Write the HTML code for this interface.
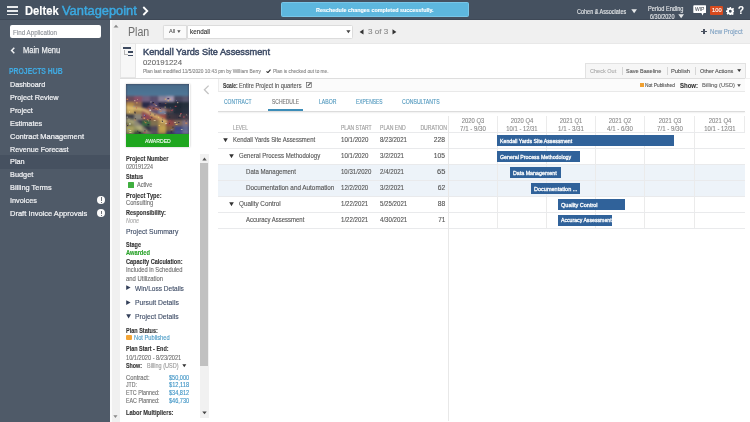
<!DOCTYPE html>
<html><head><meta charset="utf-8">
<style>
*{margin:0;padding:0;box-sizing:border-box}
html,body{width:750px;height:422px;overflow:hidden;background:#f0f0f0;font-family:"Liberation Sans",sans-serif;position:relative}
.a{position:absolute;white-space:nowrap}
.t{position:absolute;white-space:nowrap;transform-origin:0 50%;-webkit-text-stroke:0.12px currentColor}
</style></head><body>
<div class="a" style="left:0px;top:0px;width:750px;height:20px;background:#455160;"></div>
<div class="a" style="left:0px;top:19px;width:750px;height:1px;background:#3e4856;"></div>
<div class="a" style="left:7px;top:6.2px;width:11.2px;height:1.5px;background:#e8eaec;"></div>
<div class="a" style="left:7px;top:10px;width:11.2px;height:1.5px;background:#e8eaec;"></div>
<div class="a" style="left:7px;top:13.8px;width:11.2px;height:1.5px;background:#e8eaec;"></div>
<svg class="a" style="left:142px;top:5.5px" width="7" height="10" viewBox="0 0 7 10"><path d="M1.3 1 L5.3 5 L1.3 9" fill="none" stroke="#fff" stroke-width="1.8"/></svg>
<div class="a" style="left:281.3px;top:2.4px;width:187.5px;height:14.6px;background:#5db7de;border:0.8px solid #78c6e8;border-radius:1.5px"></div>
<svg class="a" style="left:630.5px;top:9px" width="7" height="5"><path d="M0.3 0.3 L6 0.3 L3.15 4.3Z" fill="#e6e8ea"/></svg>
<svg class="a" style="left:677.5px;top:14px" width="7" height="5"><path d="M0.3 0.3 L6 0.3 L3.15 4.3Z" fill="#e6e8ea"/></svg>
<svg class="a" style="left:692.8px;top:4.8px" width="13.5" height="11" viewBox="0 0 13.5 11"><path d="M1.2 0.3 H12.3 Q13.2 0.3 13.2 1.2 V7.2 Q13.2 8.1 12.3 8.1 H10.6 L9.6 10.6 L8.4 8.1 H1.2 Q0.3 8.1 0.3 7.2 V1.2 Q0.3 0.3 1.2 0.3Z" fill="#fff"/></svg>
<div class="a" style="left:709.7px;top:5.6px;width:13.8px;height:9.6px;background:#d74a1e;border-radius:1px"></div>
<svg class="a" style="left:725.8px;top:6.8px" width="8.6" height="8.6" viewBox="0 0 24 24"><path fill="#fff" fill-rule="evenodd" d="M10 0h4l.6 3.2a9 9 0 0 1 2.4 1l2.7-1.9 2.8 2.8-1.9 2.7a9 9 0 0 1 1 2.4L24 10v4l-3.2.6a9 9 0 0 1-1 2.4l1.9 2.7-2.8 2.8-2.7-1.9a9 9 0 0 1-2.4 1L14 24h-4l-.6-3.2a9 9 0 0 1-2.4-1l-2.7 1.9-2.8-2.8 1.9-2.7a9 9 0 0 1-1-2.4L0 14v-4l3.2-.6a9 9 0 0 1 1-2.4L2.3 4.3l2.8-2.8L7.8 3.4a9 9 0 0 1 2.4-1zM12 8a4 4 0 1 0 0 8 4 4 0 0 0 0-8z"/></svg>
<div class="a" style="left:0px;top:20px;width:110px;height:402px;background:#4f5a68;"></div>
<div class="a" style="left:9.5px;top:25.3px;width:91px;height:13.1px;background:#ffffff;border-radius:2px"></div>
<svg class="a" style="left:9.5px;top:46.5px" width="6" height="7"><path d="M4.3 0.8 L1.6 3.5 L4.3 6.2" fill="none" stroke="#f0f2f4" stroke-width="1.5"/></svg>
<div class="a" style="left:0px;top:155.2px;width:110px;height:13.4px;background:#465160;"></div>
<div class="a" style="left:97px;top:195.8px;width:8.4px;height:8.4px;border-radius:50%;background:#fbfbfb"></div>
<div class="a" style="left:100.75px;top:197.4px;width:0.9px;height:3.4px;background:#6a6f76;"></div>
<div class="a" style="left:100.75px;top:201.5px;width:0.9px;height:1px;background:#6a6f76;"></div>
<div class="a" style="left:97px;top:209.0px;width:8.4px;height:8.4px;border-radius:50%;background:#fbfbfb"></div>
<div class="a" style="left:100.75px;top:210.6px;width:0.9px;height:3.4px;background:#6a6f76;"></div>
<div class="a" style="left:100.75px;top:214.7px;width:0.9px;height:1px;background:#6a6f76;"></div>
<div class="a" style="left:110px;top:20px;width:1.5px;height:402px;background:#fbfbfb;"></div>
<svg class="a" style="left:112.5px;top:24px" width="6" height="4"><path d="M0.5 3.5 L5.5 3.5 L3 0.8Z" fill="#8a8a8a"/></svg>
<svg class="a" style="left:112.5px;top:415px" width="5" height="3.5"><path d="M0.3 0.3 L4.5 0.3 L2.4 3Z" fill="#8a8a8a"/></svg>
<div class="a" style="left:163.3px;top:24.5px;width:24.2px;height:14.4px;background:#fafafa;border:1px solid #dcdcdc;border-radius:1.5px 0 0 1.5px;box-shadow:0 0.5px 1px rgba(0,0,0,0.08)"></div>
<svg class="a" style="left:177.2px;top:30px" width="4" height="3.5"><path d="M0.2 0.3 L3.6 0.3 L1.9 2.9Z" fill="#555"/></svg>
<div class="a" style="left:187.3px;top:24.5px;width:165.7px;height:14.4px;background:#ffffff;border:1px solid #dcdcdc;border-radius:0 1.5px 1.5px 0"></div>
<svg class="a" style="left:345.5px;top:30px" width="5" height="4"><path d="M0.3 0.3 L4.5 0.3 L2.4 3.2Z" fill="#444"/></svg>
<svg class="a" style="left:358.5px;top:28.6px" width="5" height="6"><path d="M4.5 0.3 L4.5 5.5 L0.6 2.9Z" fill="#333"/></svg>
<svg class="a" style="left:391.8px;top:28.6px" width="5" height="6"><path d="M0.5 0.3 L0.5 5.5 L4.4 2.9Z" fill="#333"/></svg>
<div class="a" style="left:701.3px;top:30.8px;width:5.5px;height:1.4px;background:#4a5260;"></div>
<div class="a" style="left:703.35px;top:28.7px;width:1.4px;height:5.6px;background:#4a5260;"></div>
<div class="a" style="left:120px;top:42.5px;width:630px;height:35.3px;background:#ffffff;border-top:1px solid #e8e8e8"></div>
<div class="a" style="left:120px;top:77.6px;width:625px;height:1px;background:#dedede;box-shadow:0 0.5px 1px rgba(0,0,0,0.06)"></div>
<div class="a" style="left:120px;top:42.5px;width:16px;height:35.3px;background:#f7f7f7;border:1px solid #e6e6e6"></div>
<div class="a" style="left:122.5px;top:47.2px;width:8.5px;height:1.7px;background:#3d4a60;"></div>
<div class="a" style="left:124.2px;top:50px;width:0.9px;height:5.2px;background:#b4b4b4;"></div>
<div class="a" style="left:124.2px;top:54.3px;width:3.8px;height:0.9px;background:#b4b4b4;"></div>
<div class="a" style="left:128.4px;top:51.1px;width:4.3px;height:1.6px;background:#3d4a60;"></div>
<div class="a" style="left:128.4px;top:54.5px;width:4.3px;height:1.6px;background:#3d4a60;"></div>
<svg class="a" style="left:266px;top:68.6px" width="5" height="4.5" viewBox="0 0 5 4.5"><path d="M0.5 2.3 L1.9 3.7 L4.5 0.6" fill="none" stroke="#333" stroke-width="1.1"/></svg>
<div class="a" style="left:120px;top:78.6px;width:88.5px;height:343.4px;background:#ffffff;"></div>
<div class="a" style="left:125.5px;top:83.5px;width:64.2px;height:63.5px;background:#ffffff;box-shadow:0 0 2px rgba(0,0,0,0.25)"></div>
<div class="a" style="left:126px;top:84px;width:63.3px;height:50px;overflow:hidden;background:#3a3a50"><svg style="position:absolute;left:0;top:0;filter:blur(1px)" width="63.3" height="50" viewBox="0 0 63 50" preserveAspectRatio="none"><defs><linearGradient id="sky" x1="0" y1="0" x2="0" y2="1"><stop offset="0" stop-color="#466886"/><stop offset="1" stop-color="#4f7898"/></linearGradient></defs><rect x="-3" y="-3" width="70" height="16" fill="url(#sky)"/>
<rect x="-3" y="12" width="11.2" height="6.2" fill="#6a4a5c"/>
<rect x="8" y="12" width="8.2" height="6.2" fill="#8a5068"/>
<rect x="16" y="12" width="8.2" height="6.2" fill="#706080"/>
<rect x="24" y="12" width="8.2" height="6.2" fill="#5a5070"/>
<rect x="32" y="12" width="8.2" height="6.2" fill="#8a8098"/>
<rect x="40" y="12" width="8.2" height="6.2" fill="#a898b0"/>
<rect x="48" y="12" width="8.2" height="6.2" fill="#4a4860"/>
<rect x="56" y="12" width="10" height="6.2" fill="#5a5870"/>
<rect x="-3" y="18" width="11.2" height="6.2" fill="#b08848"/>
<rect x="8" y="18" width="8.2" height="6.2" fill="#906850"/>
<rect x="16" y="18" width="8.2" height="6.2" fill="#2a2a48"/>
<rect x="24" y="18" width="8.2" height="6.2" fill="#504870"/>
<rect x="32" y="18" width="8.2" height="6.2" fill="#2a2a44"/>
<rect x="40" y="18" width="8.2" height="6.2" fill="#222c3a"/>
<rect x="48" y="18" width="8.2" height="6.2" fill="#202a36"/>
<rect x="56" y="18" width="10" height="6.2" fill="#26303c"/>
<rect x="-3" y="24" width="11.2" height="6.2" fill="#c8a860"/>
<rect x="8" y="24" width="8.2" height="6.2" fill="#a08050"/>
<rect x="16" y="24" width="8.2" height="6.2" fill="#8a4a50"/>
<rect x="24" y="24" width="8.2" height="6.2" fill="#605070"/>
<rect x="32" y="24" width="8.2" height="6.2" fill="#7088a8"/>
<rect x="40" y="24" width="8.2" height="6.2" fill="#303848"/>
<rect x="48" y="24" width="8.2" height="6.2" fill="#242c38"/>
<rect x="56" y="24" width="10" height="6.2" fill="#2a3240"/>
<rect x="-3" y="30" width="11.2" height="6.2" fill="#404048"/>
<rect x="8" y="30" width="8.2" height="6.2" fill="#8a8478"/>
<rect x="16" y="30" width="8.2" height="6.2" fill="#904858"/>
<rect x="24" y="30" width="8.2" height="6.2" fill="#a06048"/>
<rect x="32" y="30" width="8.2" height="6.2" fill="#9a5048"/>
<rect x="40" y="30" width="8.2" height="6.2" fill="#403840"/>
<rect x="48" y="30" width="8.2" height="6.2" fill="#3a3440"/>
<rect x="56" y="30" width="10" height="6.2" fill="#4a4048"/>
<rect x="-3" y="36" width="11.2" height="6.2" fill="#70704a"/>
<rect x="8" y="36" width="8.2" height="6.2" fill="#383850"/>
<rect x="16" y="36" width="8.2" height="6.2" fill="#3a6a40"/>
<rect x="24" y="36" width="8.2" height="6.2" fill="#807050"/>
<rect x="32" y="36" width="8.2" height="6.2" fill="#b09050"/>
<rect x="40" y="36" width="8.2" height="6.2" fill="#904848"/>
<rect x="48" y="36" width="8.2" height="6.2" fill="#806858"/>
<rect x="56" y="36" width="10" height="6.2" fill="#807080"/>
<rect x="-3" y="42" width="11.2" height="5.2" fill="#a8a060"/>
<rect x="8" y="42" width="8.2" height="5.2" fill="#909060"/>
<rect x="16" y="42" width="8.2" height="5.2" fill="#303040"/>
<rect x="24" y="42" width="8.2" height="5.2" fill="#504858"/>
<rect x="32" y="42" width="8.2" height="5.2" fill="#c0a050"/>
<rect x="40" y="42" width="8.2" height="5.2" fill="#806040"/>
<rect x="48" y="42" width="8.2" height="5.2" fill="#404880"/>
<rect x="56" y="42" width="10" height="5.2" fill="#606890"/>
<rect x="-3" y="47" width="11.2" height="6.2" fill="#909058"/>
<rect x="8" y="47" width="8.2" height="6.2" fill="#405038"/>
<rect x="16" y="47" width="8.2" height="6.2" fill="#282830"/>
<rect x="24" y="47" width="8.2" height="6.2" fill="#605060"/>
<rect x="32" y="47" width="8.2" height="6.2" fill="#b09048"/>
<rect x="40" y="47" width="8.2" height="6.2" fill="#3a3a60"/>
<rect x="48" y="47" width="8.2" height="6.2" fill="#4a5090"/>
<rect x="56" y="47" width="10" height="6.2" fill="#707098"/>
<path d="M-2 21 L18 24 L42 37 L40 39.5 L16 27 L-2 24.5Z" fill="#e8c878" opacity="0.75"/>
<path d="M-2 33 L10 36 L26 50 L18 50 L6 40 L-2 38Z" fill="#c8c090" opacity="0.6"/>
<path d="M22 22 L46 26 L46 28 L22 25Z" fill="#d07050" opacity="0.6"/></svg><svg style="position:absolute;left:0;top:0;filter:blur(0.4px);opacity:0.8" width="63.3" height="50" viewBox="0 0 63 50" preserveAspectRatio="none">
<rect x="38.6" y="39.7" width="0.6" height="0.9" fill="#e8d070"/>
<rect x="58.5" y="36.4" width="0.8" height="0.9" fill="#e08848"/>
<rect x="15.3" y="32.6" width="0.9" height="1.1" fill="#181820"/>
<rect x="25.3" y="19.6" width="0.8" height="1.1" fill="#302850"/>
<rect x="8.6" y="35.2" width="0.8" height="1.3" fill="#e08848"/>
<rect x="0.3" y="40.8" width="1.8" height="0.7" fill="#e08848"/>
<rect x="59.6" y="32.4" width="0.9" height="1.3" fill="#2a3448"/>
<rect x="12.2" y="47.7" width="1.0" height="0.8" fill="#302850"/>
<rect x="10.3" y="18.2" width="1.1" height="1.2" fill="#f0c060"/>
<rect x="36.3" y="34.5" width="0.7" height="0.8" fill="#202040"/>
<rect x="19.0" y="38.1" width="1.3" height="1.1" fill="#e08848"/>
<rect x="3.5" y="48.1" width="1.9" height="0.8" fill="#fff0c0"/>
<rect x="25.1" y="32.8" width="1.1" height="1.0" fill="#302850"/>
<rect x="0.6" y="14.7" width="1.5" height="1.3" fill="#e08848"/>
<rect x="7.4" y="21.9" width="1.1" height="0.8" fill="#8090d0"/>
<rect x="32.5" y="40.9" width="1.4" height="1.1" fill="#f0c060"/>
<rect x="22.8" y="23.7" width="1.9" height="0.6" fill="#302850"/>
<rect x="21.1" y="35.0" width="1.1" height="1.2" fill="#e08848"/>
<rect x="33.8" y="24.2" width="1.0" height="1.1" fill="#202040"/>
<rect x="38.9" y="39.0" width="2.0" height="0.6" fill="#f8f8f0"/>
<rect x="3.0" y="48.5" width="1.9" height="0.5" fill="#e8d070"/>
<rect x="45.9" y="25.4" width="1.2" height="0.8" fill="#c04858"/>
<rect x="3.5" y="46.0" width="1.7" height="0.8" fill="#fff0c0"/>
<rect x="12.8" y="48.3" width="1.9" height="1.0" fill="#181820"/>
<rect x="48.9" y="16.8" width="1.1" height="0.5" fill="#302850"/>
<rect x="26.1" y="18.1" width="1.8" height="1.3" fill="#181820"/>
<rect x="28.1" y="30.6" width="1.3" height="0.7" fill="#202040"/>
<rect x="25.0" y="18.3" width="1.8" height="0.9" fill="#302850"/>
<rect x="11.1" y="46.7" width="0.9" height="0.9" fill="#202040"/>
<rect x="31.9" y="32.7" width="1.1" height="1.1" fill="#e8d070"/>
<rect x="48.0" y="38.0" width="1.7" height="0.8" fill="#fff0c0"/>
<rect x="43.7" y="23.1" width="1.0" height="1.3" fill="#405070"/>
<rect x="44.4" y="47.4" width="1.5" height="1.0" fill="#202040"/>
<rect x="0.7" y="32.7" width="1.1" height="0.7" fill="#f8f8f0"/>
<rect x="17.9" y="31.0" width="1.1" height="1.0" fill="#202040"/>
<rect x="45.7" y="42.8" width="1.9" height="0.6" fill="#202040"/>
<rect x="53.8" y="29.2" width="1.9" height="0.9" fill="#c04858"/>
<rect x="32.8" y="19.0" width="1.9" height="0.9" fill="#202040"/>
<rect x="42.9" y="38.9" width="0.8" height="1.1" fill="#302850"/>
<rect x="36.0" y="37.0" width="1.0" height="0.9" fill="#302850"/>
<rect x="53.8" y="22.7" width="0.9" height="1.0" fill="#1a2438"/>
<rect x="38.7" y="19.5" width="1.5" height="0.5" fill="#e08848"/>
<rect x="29.2" y="21.1" width="1.8" height="0.6" fill="#fff0c0"/>
<rect x="60.0" y="30.4" width="0.6" height="0.9" fill="#e0c0a0"/>
<rect x="23.6" y="35.0" width="0.9" height="1.1" fill="#181820"/>
<rect x="23.2" y="25.6" width="1.8" height="1.2" fill="#f8f8f0"/>
<rect x="42.7" y="32.7" width="1.4" height="0.7" fill="#1a2438"/>
<rect x="18.3" y="31.5" width="1.0" height="0.8" fill="#181820"/>
<rect x="8.0" y="27.7" width="1.5" height="0.8" fill="#181820"/>
<rect x="8.8" y="34.5" width="1.3" height="0.7" fill="#181820"/>
<rect x="8.2" y="16.3" width="1.1" height="0.8" fill="#fff0c0"/>
<rect x="56.8" y="32.4" width="1.5" height="1.2" fill="#c04858"/>
<rect x="23.3" y="28.5" width="1.3" height="0.9" fill="#c83c50"/>
<rect x="43.9" y="26.8" width="1.4" height="0.7" fill="#2a3448"/>
<rect x="60.8" y="30.9" width="0.6" height="1.3" fill="#405070"/>
<rect x="19.1" y="46.5" width="1.3" height="0.6" fill="#e08848"/>
<rect x="38.5" y="29.0" width="0.7" height="0.6" fill="#f8f8f0"/>
<rect x="24.3" y="30.3" width="1.0" height="1.2" fill="#e8d070"/>
<rect x="48.5" y="21.8" width="1.8" height="1.1" fill="#c04858"/>
<rect x="17.7" y="30.7" width="1.3" height="1.2" fill="#8090d0"/>
<rect x="54.6" y="45.2" width="1.7" height="0.7" fill="#fff0c0"/>
<rect x="33.1" y="25.1" width="1.6" height="0.5" fill="#f8f8f0"/>
<rect x="21.7" y="37.5" width="0.8" height="0.5" fill="#181820"/>
<rect x="34.3" y="37.7" width="1.8" height="0.9" fill="#f0c060"/>
<rect x="0.9" y="41.0" width="1.4" height="1.1" fill="#302850"/>
<rect x="59.1" y="36.4" width="1.3" height="1.0" fill="#302850"/>
<rect x="44.6" y="45.4" width="1.8" height="0.6" fill="#8090d0"/>
<rect x="51.8" y="38.0" width="1.4" height="1.0" fill="#302850"/>
<rect x="29.3" y="24.2" width="1.3" height="0.9" fill="#e08848"/>
<rect x="30.9" y="24.9" width="1.2" height="0.9" fill="#e08848"/>
<rect x="3.0" y="39.4" width="1.7" height="1.1" fill="#f8f8f0"/>
<rect x="41.1" y="13.9" width="2.0" height="1.3" fill="#302850"/>
<rect x="43.5" y="14.8" width="0.9" height="1.0" fill="#f0c060"/>
<rect x="59.0" y="38.6" width="2.0" height="1.1" fill="#e08848"/>
<rect x="27.2" y="19.6" width="1.2" height="0.6" fill="#e08848"/>
<rect x="38.6" y="14.6" width="1.5" height="1.1" fill="#f0c060"/>
<rect x="17.4" y="33.6" width="1.6" height="1.2" fill="#f0c060"/>
<rect x="8.3" y="28.5" width="1.6" height="0.9" fill="#202040"/>
<rect x="21.9" y="36.6" width="0.8" height="0.7" fill="#fff0c0"/>
<rect x="35.3" y="37.4" width="1.9" height="0.9" fill="#f8f8f0"/>
<rect x="38.5" y="22.5" width="0.9" height="1.2" fill="#e8d070"/>
<rect x="17.6" y="48.1" width="1.8" height="0.9" fill="#c83c50"/>
<rect x="24.1" y="17.7" width="1.5" height="0.6" fill="#fff0c0"/>
<rect x="41.4" y="16.3" width="1.3" height="0.9" fill="#f0c060"/>
<rect x="24.2" y="29.7" width="0.8" height="0.9" fill="#202040"/>
<rect x="33.6" y="26.8" width="1.9" height="0.8" fill="#e08848"/>
<rect x="49.3" y="40.0" width="2.0" height="1.0" fill="#f0c060"/>
<rect x="50.9" y="18.0" width="1.1" height="1.2" fill="#e0c0a0"/>
<rect x="18.0" y="46.5" width="1.7" height="0.8" fill="#202040"/>
<rect x="44.8" y="25.9" width="1.7" height="0.8" fill="#c04858"/>
<rect x="52.8" y="31.6" width="2.0" height="0.7" fill="#e0c0a0"/>
<rect x="11.2" y="15.3" width="0.6" height="0.7" fill="#fff0c0"/>
<rect x="2.4" y="45.0" width="1.5" height="0.8" fill="#8090d0"/>
<rect x="26.5" y="23.8" width="1.9" height="0.8" fill="#181820"/>
<rect x="28.6" y="19.9" width="0.7" height="1.2" fill="#e08848"/>
<rect x="53.9" y="29.9" width="1.0" height="0.7" fill="#e0c0a0"/>
<rect x="10.0" y="23.3" width="0.6" height="1.2" fill="#c83c50"/>
<rect x="21.3" y="40.1" width="1.9" height="1.1" fill="#202040"/>
<rect x="41.8" y="30.0" width="0.8" height="1.0" fill="#2a3448"/>
<rect x="18.0" y="37.3" width="0.6" height="1.1" fill="#e08848"/>
<rect x="35.6" y="36.6" width="1.2" height="1.3" fill="#181820"/>
<rect x="22.6" y="24.2" width="1.1" height="0.6" fill="#8090d0"/>
<rect x="61.6" y="29.8" width="0.8" height="0.7" fill="#2a3448"/>
<rect x="2.7" y="34.9" width="0.6" height="0.5" fill="#f8f8f0"/>
<rect x="48.3" y="27.8" width="0.6" height="1.2" fill="#1a2438"/>
<rect x="51.9" y="33.3" width="1.6" height="0.7" fill="#1a2438"/>
<rect x="49.8" y="16.3" width="0.7" height="0.7" fill="#8090d0"/>
<rect x="3.1" y="27.3" width="0.7" height="1.2" fill="#fff0c0"/>
<rect x="27.6" y="36.1" width="1.9" height="0.7" fill="#fff0c0"/>
<rect x="43.1" y="36.1" width="1.3" height="0.6" fill="#c83c50"/></svg></div>
<div class="a" style="left:126px;top:134px;width:63.3px;height:12.7px;background:#1fa61f;"></div>
<div class="a" style="left:128px;top:182px;width:6px;height:5.5px;background:#3fae3f;border-radius:0.5px"></div>
<svg class="a" style="left:126px;top:285.29999999999995px" width="5" height="5.5"><path d="M0.2 0.2 L4.6 2.6 L0.2 5Z" fill="#34405a"/></svg>
<svg class="a" style="left:126px;top:300.0px" width="5" height="5.5"><path d="M0.2 0.2 L4.6 2.6 L0.2 5Z" fill="#34405a"/></svg>
<svg class="a" style="left:125.8px;top:314.2px" width="5.5" height="5"><path d="M0.2 0.3 L5 0.3 L2.6 4.6Z" fill="#34405a"/></svg>
<div class="a" style="left:126.2px;top:334.5px;width:5.6px;height:5.8px;background:#f3a536;border-radius:1px"></div>
<svg class="a" style="left:181.5px;top:363.5px" width="5" height="4"><path d="M0.3 0.3 L4.3 0.3 L2.3 3.3Z" fill="#333"/></svg>
<div class="a" style="left:199.5px;top:154px;width:9px;height:264px;background:#f1f1f1;"></div>
<div class="a" style="left:200px;top:163px;width:8px;height:202.5px;background:#c1c1c1;"></div>
<svg class="a" style="left:201.5px;top:157px" width="5" height="4"><path d="M0.3 3.5 L4.7 3.5 L2.5 0.6Z" fill="#555"/></svg>
<svg class="a" style="left:201.5px;top:410.5px" width="5" height="4"><path d="M0.3 0.4 L4.7 0.4 L2.5 3.3Z" fill="#444"/></svg>
<div class="a" style="left:208.5px;top:78.6px;width:10px;height:343.4px;background:#ffffff;"></div>
<svg class="a" style="left:203px;top:84.8px" width="7" height="10"><path d="M5.6 0.6 L1.4 4.8 L5.6 9" fill="none" stroke="#c4c4c4" stroke-width="1.3"/></svg>
<div class="a" style="left:218.3px;top:78.6px;width:531.7px;height:343.4px;background:#ffffff;"></div>
<div class="a" style="left:584.5px;top:63.3px;width:161.3px;height:14.6px;background:#f6f6f6;border:1px solid #e2e2e2;border-bottom:none"></div>
<div class="a" style="left:621.5px;top:66.5px;width:0.8px;height:8px;background:#d6d6d6;"></div>
<div class="a" style="left:666.8px;top:66.5px;width:0.8px;height:8px;background:#d6d6d6;"></div>
<div class="a" style="left:694.9px;top:66.5px;width:0.8px;height:8px;background:#d6d6d6;"></div>
<svg class="a" style="left:737px;top:69.2px" width="4.5" height="3.5"><path d="M0.2 0.3 L4.2 0.3 L2.2 3.1Z" fill="#333"/></svg>
<div class="a" style="left:218.3px;top:78.6px;width:526.7px;height:13.8px;background:#fbfbfb;border-bottom:1px solid #e9e9e9;border-left:1px solid #ececec"></div>
<svg class="a" style="left:306.3px;top:82.3px" width="6" height="6" viewBox="0 0 6 6"><rect x="0.5" y="0.6" width="4.8" height="4.8" fill="none" stroke="#666" stroke-width="0.7"/><path d="M1.5 4.3 L1.7 3.3 L4.2 0.8 L5 1.6 L2.5 4.1 Z" fill="#555"/></svg>
<div class="a" style="left:639.6px;top:82.8px;width:4.6px;height:4.6px;background:#f0a030;"></div>
<svg class="a" style="left:737px;top:84px" width="4" height="3.5"><path d="M0.2 0.3 L3.8 0.3 L2 3.1Z" fill="#555"/></svg>
<div class="a" style="left:218.3px;top:110.5px;width:526.7px;height:1px;background:#dcdcdc;box-shadow:0 1px 1.5px rgba(0,0,0,0.08)"></div>
<div class="a" style="left:268px;top:109px;width:34.8px;height:1.8px;background:#3d8db8;"></div>
<div class="a" style="left:218.3px;top:164px;width:526.5px;height:32px;background:#edf3f9;"></div>
<div class="a" style="left:496.8px;top:115.5px;width:1px;height:112.5px;background:#ebebeb;"></div>
<div class="a" style="left:546.0px;top:115.5px;width:1px;height:112.5px;background:#ebebeb;"></div>
<div class="a" style="left:595.1px;top:115.5px;width:1px;height:112.5px;background:#ebebeb;"></div>
<div class="a" style="left:644.2px;top:115.5px;width:1px;height:112.5px;background:#ebebeb;"></div>
<div class="a" style="left:693.9px;top:115.5px;width:1px;height:112.5px;background:#ebebeb;"></div>
<div class="a" style="left:744.3px;top:115.5px;width:1px;height:17px;background:#ebebeb;"></div>
<div class="a" style="left:218.3px;top:131.5px;width:526.5px;height:1px;background:#e9eaec;"></div>
<div class="a" style="left:218.3px;top:147.5px;width:526.5px;height:1px;background:#e9eaec;"></div>
<div class="a" style="left:218.3px;top:163.5px;width:526.5px;height:1px;background:#e9eaec;"></div>
<div class="a" style="left:218.3px;top:179.5px;width:526.5px;height:1px;background:#e9eaec;"></div>
<div class="a" style="left:218.3px;top:195.5px;width:526.5px;height:1px;background:#e9eaec;"></div>
<div class="a" style="left:218.3px;top:211.5px;width:526.5px;height:1px;background:#e9eaec;"></div>
<div class="a" style="left:218.3px;top:227.5px;width:526.5px;height:1px;background:#e9eaec;"></div>
<div class="a" style="left:447.5px;top:115.5px;width:1px;height:305px;background:#e8e8e8;"></div>
<svg class="a" style="left:222.6px;top:137.9px" width="5.5" height="4.5"><path d="M0.2 0.2 L4.8 0.2 L2.5 4.2Z" fill="#333"/></svg>
<svg class="a" style="left:228.79999999999998px;top:153.9px" width="5.5" height="4.5"><path d="M0.2 0.2 L4.8 0.2 L2.5 4.2Z" fill="#333"/></svg>
<svg class="a" style="left:228.79999999999998px;top:201.9px" width="5.5" height="4.5"><path d="M0.2 0.2 L4.8 0.2 L2.5 4.2Z" fill="#333"/></svg>
<div class="a" style="left:497.1px;top:135px;width:177.3px;height:11px;background:#30629a;"></div>
<div class="a" style="left:497.1px;top:151px;width:82.7px;height:11px;background:#30629a;"></div>
<div class="a" style="left:509.9px;top:166.6px;width:51.1px;height:11px;background:#30629a;"></div>
<div class="a" style="left:530.7px;top:182.7px;width:49.1px;height:11px;background:#30629a;"></div>
<div class="a" style="left:558.4px;top:198.6px;width:67.0px;height:11px;background:#30629a;"></div>
<div class="a" style="left:558.4px;top:214.5px;width:53.6px;height:11px;background:#30629a;"></div>
<div class="t" style="left:24.8px;top:5.60px;font-size:11.9px;line-height:11.9px;color:#ffffff;font-weight:bold;transform:scaleX(0.9439);">Deltek</div>
<div class="t" style="left:62px;top:5.60px;font-size:11.9px;line-height:11.9px;color:#3ba9e1;transform:scaleX(1.0809);-webkit-text-stroke:0.45px #3ba9e1">Vantagepoint</div>
<div class="t" style="left:316px;top:7.12px;font-size:6px;line-height:6px;color:#ffffff;font-weight:bold;transform:scaleX(0.9027);">Reschedule changes completed successfully.</div>
<div class="t" style="left:577.2px;top:8.80px;font-size:6.3px;line-height:6.3px;color:#e6e8ea;transform:scaleX(0.8730);">Cohen &amp; Associates</div>
<div class="t" style="left:648px;top:5.90px;font-size:6.3px;line-height:6.3px;color:#e6e8ea;transform:scaleX(0.8973);">Period Ending</div>
<div class="t" style="left:650px;top:13.80px;font-size:6.3px;line-height:6.3px;color:#e6e8ea;transform:scaleX(0.8745);">6/30/2020</div>
<div class="t" style="left:694.6px;top:7.00px;font-size:5.2px;line-height:5.2px;color:#555a62;transform:scaleX(0.9580);">WIP</div>
<div class="t" style="left:711.8px;top:7.40px;font-size:6.2px;line-height:6.2px;color:#ffffff;transform:scaleX(0.9295);">100</div>
<div class="t" style="left:738px;top:5.40px;font-size:10.5px;line-height:10.5px;color:#ffffff;font-weight:bold;transform:scaleX(0.9343);">?</div>
<div class="t" style="left:13px;top:28.84px;font-size:7px;line-height:7px;color:#8c9097;transform:scaleX(0.8903);">Find Application</div>
<div class="t" style="left:22.8px;top:45.70px;font-size:8.3px;line-height:8.3px;color:#eceef0;transform:scaleX(0.9063);-webkit-text-stroke:0.25px #eceef0">Main Menu</div>
<div class="t" style="left:9.4px;top:67.80px;font-size:8.2px;line-height:8.2px;color:#40aae2;font-weight:bold;transform:scaleX(0.8355);">PROJECTS HUB</div>
<div class="t" style="left:9.8px;top:81.30px;font-size:8.1px;line-height:8.1px;color:#f2f3f5;transform:scaleX(0.8887);-webkit-text-stroke:0.22px #f2f3f5">Dashboard</div>
<div class="t" style="left:9.8px;top:94.30px;font-size:8.1px;line-height:8.1px;color:#f2f3f5;transform:scaleX(0.9003);-webkit-text-stroke:0.22px #f2f3f5">Project Review</div>
<div class="t" style="left:9.8px;top:107.00px;font-size:8.1px;line-height:8.1px;color:#f2f3f5;transform:scaleX(0.9063);-webkit-text-stroke:0.22px #f2f3f5">Project</div>
<div class="t" style="left:9.8px;top:119.80px;font-size:8.1px;line-height:8.1px;color:#f2f3f5;transform:scaleX(0.9063);-webkit-text-stroke:0.22px #f2f3f5">Estimates</div>
<div class="t" style="left:9.8px;top:132.70px;font-size:8.1px;line-height:8.1px;color:#f2f3f5;transform:scaleX(0.9239);-webkit-text-stroke:0.22px #f2f3f5">Contract Management</div>
<div class="t" style="left:9.8px;top:145.50px;font-size:8.1px;line-height:8.1px;color:#f2f3f5;transform:scaleX(0.8845);-webkit-text-stroke:0.22px #f2f3f5">Revenue Forecast</div>
<div class="t" style="left:9.8px;top:158.30px;font-size:8.1px;line-height:8.1px;color:#f2f3f5;transform:scaleX(0.9063);-webkit-text-stroke:0.22px #f2f3f5">Plan</div>
<div class="t" style="left:9.8px;top:171.10px;font-size:8.1px;line-height:8.1px;color:#f2f3f5;transform:scaleX(0.9063);-webkit-text-stroke:0.22px #f2f3f5">Budget</div>
<div class="t" style="left:9.8px;top:183.90px;font-size:8.1px;line-height:8.1px;color:#f2f3f5;transform:scaleX(0.9118);-webkit-text-stroke:0.22px #f2f3f5">Billing Terms</div>
<div class="t" style="left:9.8px;top:196.80px;font-size:8.1px;line-height:8.1px;color:#f2f3f5;transform:scaleX(0.9063);-webkit-text-stroke:0.22px #f2f3f5">Invoices</div>
<div class="t" style="left:9.8px;top:209.80px;font-size:8.1px;line-height:8.1px;color:#f2f3f5;transform:scaleX(0.9287);-webkit-text-stroke:0.22px #f2f3f5">Draft Invoice Approvals</div>
<div class="t" style="left:127.7px;top:25.84px;font-size:12px;line-height:12px;color:#6e6e6e;transform:scaleX(0.8863);-webkit-text-stroke:0">Plan</div>
<div class="t" style="left:168.7px;top:28.40px;font-size:6.2px;line-height:6.2px;color:#555555;transform:scaleX(0.8998);">All</div>
<div class="t" style="left:190px;top:28.24px;font-size:7px;line-height:7px;color:#333333;transform:scaleX(0.9014);">kendall</div>
<div class="t" style="left:367.9px;top:29.10px;font-size:6.8px;line-height:6.8px;color:#8a8a8a;transform:scaleX(1.1871);">3 of 3</div>
<div class="t" style="left:710px;top:29.10px;font-size:6.6px;line-height:6.6px;color:#7a9ec0;transform:scaleX(0.9199);">New Project</div>
<div class="t" style="left:143px;top:47.10px;font-size:9.9px;line-height:9.9px;color:#3e4c66;transform:scaleX(0.9317);-webkit-text-stroke:0.5px #3e4c66">Kendall Yards Site Assessment</div>
<div class="t" style="left:143px;top:59.20px;font-size:7.5px;line-height:7.5px;color:#6a6a6a;transform:scaleX(1.0387);">020191224</div>
<div class="t" style="left:143px;top:70.00px;font-size:4.8px;line-height:4.8px;color:#8a8a8a;transform:scaleX(1.0043);">Plan last modified 11/5/2020 10:43 pm by William Berry</div>
<div class="t" style="left:272.5px;top:70.00px;font-size:4.8px;line-height:4.8px;color:#8a8a8a;transform:scaleX(0.9864);">Plan is checked out to me.</div>
<div class="t" style="left:145px;top:137.52px;font-size:6px;line-height:6px;color:#ffffff;transform:scaleX(0.8533);">AWARDED</div>
<div class="t" style="left:126.1px;top:155.50px;font-size:6.4px;line-height:6.4px;color:#333333;font-weight:bold;transform:scaleX(0.8930);">Project Number</div>
<div class="t" style="left:126.1px;top:163.60px;font-size:6.4px;line-height:6.4px;color:#6f6f6f;transform:scaleX(0.8438);">020191224</div>
<div class="t" style="left:126.1px;top:173.90px;font-size:6.4px;line-height:6.4px;color:#333333;font-weight:bold;transform:scaleX(0.8704);">Status</div>
<div class="t" style="left:137.2px;top:182.10px;font-size:6.4px;line-height:6.4px;color:#6f6f6f;transform:scaleX(0.8790);">Active</div>
<div class="t" style="left:126.1px;top:192.50px;font-size:6.4px;line-height:6.4px;color:#333333;font-weight:bold;transform:scaleX(0.8897);">Project Type:</div>
<div class="t" style="left:126.1px;top:200.30px;font-size:6.4px;line-height:6.4px;color:#6f6f6f;transform:scaleX(0.8973);">Consulting</div>
<div class="t" style="left:126.1px;top:209.90px;font-size:6.4px;line-height:6.4px;color:#333333;font-weight:bold;transform:scaleX(0.8709);">Responsibility:</div>
<div class="t" style="left:126.1px;top:218.00px;font-size:6.4px;line-height:6.4px;color:#aaaaaa;transform:scaleX(0.8442);font-style:italic">None</div>
<div class="t" style="left:126.1px;top:227.70px;font-size:7.2px;line-height:7.2px;color:#3e4c66;transform:scaleX(0.9488);">Project Summary</div>
<div class="t" style="left:126.1px;top:242.10px;font-size:6.4px;line-height:6.4px;color:#333333;font-weight:bold;transform:scaleX(0.8618);">Stage</div>
<div class="t" style="left:126.1px;top:250.00px;font-size:6.4px;line-height:6.4px;color:#27a127;font-weight:bold;transform:scaleX(0.8930);">Awarded</div>
<div class="t" style="left:126.1px;top:259.20px;font-size:6.4px;line-height:6.4px;color:#333333;font-weight:bold;transform:scaleX(0.8692);">Capacity Calculation:</div>
<div class="t" style="left:126.1px;top:267.10px;font-size:6.4px;line-height:6.4px;color:#6f6f6f;transform:scaleX(0.8984);">Included in Scheduled</div>
<div class="t" style="left:126.1px;top:276.20px;font-size:6.4px;line-height:6.4px;color:#6f6f6f;transform:scaleX(0.9239);">and Utilization</div>
<div class="t" style="left:134.6px;top:284.54px;font-size:7px;line-height:7px;color:#3e4c66;transform:scaleX(0.9378);">Win/Loss Details</div>
<div class="t" style="left:134.6px;top:299.24px;font-size:7px;line-height:7px;color:#3e4c66;transform:scaleX(0.9703);">Pursuit Details</div>
<div class="t" style="left:134.6px;top:313.14px;font-size:7px;line-height:7px;color:#3e4c66;transform:scaleX(0.9659);">Project Details</div>
<div class="t" style="left:126.1px;top:327.60px;font-size:6.4px;line-height:6.4px;color:#333333;font-weight:bold;transform:scaleX(0.8609);">Plan Status:</div>
<div class="t" style="left:134.4px;top:335.10px;font-size:6.4px;line-height:6.4px;color:#4a9bc6;transform:scaleX(0.8945);">Not Published</div>
<div class="t" style="left:126.1px;top:346.00px;font-size:6.4px;line-height:6.4px;color:#333333;font-weight:bold;transform:scaleX(0.8568);">Plan Start - End:</div>
<div class="t" style="left:126.1px;top:354.50px;font-size:6.4px;line-height:6.4px;color:#6f6f6f;transform:scaleX(0.8825);">10/1/2020 - 8/23/2021</div>
<div class="t" style="left:126.1px;top:362.70px;font-size:6.4px;line-height:6.4px;color:#333333;font-weight:bold;transform:scaleX(0.8346);">Show:</div>
<div class="t" style="left:146.5px;top:362.70px;font-size:6.4px;line-height:6.4px;color:#999999;transform:scaleX(0.8612);">Billing (USD)</div>
<div class="t" style="left:126.1px;top:374.50px;font-size:6.4px;line-height:6.4px;color:#6f6f6f;transform:scaleX(0.9099);">Contract:</div>
<div class="t" style="left:168.7px;top:374.50px;font-size:6.4px;line-height:6.4px;color:#3d93c4;transform:scaleX(0.8698);">$50,000</div>
<div class="t" style="left:126.1px;top:382.20px;font-size:6.4px;line-height:6.4px;color:#6f6f6f;transform:scaleX(0.8148);">JTD:</div>
<div class="t" style="left:168.7px;top:382.20px;font-size:6.4px;line-height:6.4px;color:#3d93c4;transform:scaleX(0.8878);">$12,118</div>
<div class="t" style="left:126.1px;top:390.00px;font-size:6.4px;line-height:6.4px;color:#6f6f6f;transform:scaleX(0.8418);">ETC Planned:</div>
<div class="t" style="left:168.7px;top:390.00px;font-size:6.4px;line-height:6.4px;color:#3d93c4;transform:scaleX(0.8698);">$34,812</div>
<div class="t" style="left:126.1px;top:397.70px;font-size:6.4px;line-height:6.4px;color:#6f6f6f;transform:scaleX(0.8342);">EAC Planned:</div>
<div class="t" style="left:168.7px;top:397.70px;font-size:6.4px;line-height:6.4px;color:#3d93c4;transform:scaleX(0.8698);">$46,730</div>
<div class="t" style="left:126.1px;top:409.80px;font-size:6.4px;line-height:6.4px;color:#333333;font-weight:bold;transform:scaleX(0.8858);">Labor Multipliers:</div>
<div class="t" style="left:590px;top:67.72px;font-size:6px;line-height:6px;color:#ababab;transform:scaleX(0.9239);">Check Out</div>
<div class="t" style="left:626.3px;top:67.72px;font-size:6px;line-height:6px;color:#555555;transform:scaleX(0.9176);">Save Baseline</div>
<div class="t" style="left:671px;top:67.72px;font-size:6px;line-height:6px;color:#555555;transform:scaleX(0.9651);">Publish</div>
<div class="t" style="left:700px;top:67.72px;font-size:6px;line-height:6px;color:#555555;transform:scaleX(0.9242);">Other Actions</div>
<div class="t" style="left:222.5px;top:82.70px;font-size:6.5px;line-height:6.5px;color:#3a3a3a;font-weight:bold;transform:scaleX(0.7674);">Scale:</div>
<div class="t" style="left:239.3px;top:82.70px;font-size:6.5px;line-height:6.5px;color:#555555;transform:scaleX(0.8736);">Entire Project in quarters</div>
<div class="t" style="left:645.3px;top:82.80px;font-size:5px;line-height:5px;color:#555555;transform:scaleX(0.9569);">Not Published</div>
<div class="t" style="left:680.2px;top:81.80px;font-size:7.2px;line-height:7.2px;color:#333333;font-weight:bold;transform:scaleX(0.8348);">Show:</div>
<div class="t" style="left:701.8px;top:83.20px;font-size:5.9px;line-height:5.9px;color:#666666;transform:scaleX(0.9787);">Billing (USD)</div>
<div class="t" style="left:224px;top:98.70px;font-size:6.5px;line-height:6.5px;color:#4f97bd;transform:scaleX(0.7616);">CONTRACT</div>
<div class="t" style="left:272px;top:98.70px;font-size:6.5px;line-height:6.5px;color:#777777;transform:scaleX(0.7626);">SCHEDULE</div>
<div class="t" style="left:319px;top:98.70px;font-size:6.5px;line-height:6.5px;color:#4f97bd;transform:scaleX(0.7892);">LABOR</div>
<div class="t" style="left:355.9px;top:98.70px;font-size:6.5px;line-height:6.5px;color:#4f97bd;transform:scaleX(0.7590);">EXPENSES</div>
<div class="t" style="left:402px;top:98.70px;font-size:6.5px;line-height:6.5px;color:#4f97bd;transform:scaleX(0.7926);">CONSULTANTS</div>
<div class="t" style="left:233px;top:125.20px;font-size:6.4px;line-height:6.4px;color:#999999;transform:scaleX(0.7485);">LEVEL</div>
<div class="t" style="left:340.5px;top:125.20px;font-size:6.4px;line-height:6.4px;color:#999999;transform:scaleX(0.7907);">PLAN START</div>
<div class="t" style="left:380.3px;top:125.20px;font-size:6.4px;line-height:6.4px;color:#999999;transform:scaleX(0.8039);">PLAN END</div>
<div class="t" style="right:303.50px;transform-origin:100% 50%;top:125.20px;font-size:6.4px;line-height:6.4px;color:#999999;transform:scaleX(0.8053);">DURATION</div>
<div class="t" style="left:372.65px;width:200px;text-align:center;transform-origin:50% 50%;top:117.80px;font-size:6.6px;line-height:6.6px;color:#8a8a8a;transform:scaleX(0.8855);">2020 Q3</div>
<div class="t" style="left:372.65px;width:200px;text-align:center;transform-origin:50% 50%;top:125.70px;font-size:6.6px;line-height:6.6px;color:#8a8a8a;transform:scaleX(0.9297);">7/1 - 9/30</div>
<div class="t" style="left:421.90px;width:200px;text-align:center;transform-origin:50% 50%;top:117.80px;font-size:6.6px;line-height:6.6px;color:#8a8a8a;transform:scaleX(0.8855);">2020 Q4</div>
<div class="t" style="left:421.90px;width:200px;text-align:center;transform-origin:50% 50%;top:125.70px;font-size:6.6px;line-height:6.6px;color:#8a8a8a;transform:scaleX(0.8891);">10/1 - 12/31</div>
<div class="t" style="left:471.05px;width:200px;text-align:center;transform-origin:50% 50%;top:117.80px;font-size:6.6px;line-height:6.6px;color:#8a8a8a;transform:scaleX(0.8855);">2021 Q1</div>
<div class="t" style="left:471.05px;width:200px;text-align:center;transform-origin:50% 50%;top:125.70px;font-size:6.6px;line-height:6.6px;color:#8a8a8a;transform:scaleX(0.9297);">1/1 - 3/31</div>
<div class="t" style="left:520.15px;width:200px;text-align:center;transform-origin:50% 50%;top:117.80px;font-size:6.6px;line-height:6.6px;color:#8a8a8a;transform:scaleX(0.8855);">2021 Q2</div>
<div class="t" style="left:520.15px;width:200px;text-align:center;transform-origin:50% 50%;top:125.70px;font-size:6.6px;line-height:6.6px;color:#8a8a8a;transform:scaleX(0.9297);">4/1 - 6/30</div>
<div class="t" style="left:569.55px;width:200px;text-align:center;transform-origin:50% 50%;top:117.80px;font-size:6.6px;line-height:6.6px;color:#8a8a8a;transform:scaleX(0.8855);">2021 Q3</div>
<div class="t" style="left:569.55px;width:200px;text-align:center;transform-origin:50% 50%;top:125.70px;font-size:6.6px;line-height:6.6px;color:#8a8a8a;transform:scaleX(0.9297);">7/1 - 9/30</div>
<div class="t" style="left:619.55px;width:200px;text-align:center;transform-origin:50% 50%;top:117.80px;font-size:6.6px;line-height:6.6px;color:#8a8a8a;transform:scaleX(0.8855);">2021 Q4</div>
<div class="t" style="left:619.55px;width:200px;text-align:center;transform-origin:50% 50%;top:125.70px;font-size:6.6px;line-height:6.6px;color:#8a8a8a;transform:scaleX(0.8891);">10/1 - 12/31</div>
<div class="t" style="left:232.9px;top:137.10px;font-size:6.6px;line-height:6.6px;color:#555555;transform:scaleX(0.9019);">Kendall Yards Site Assessment</div>
<div class="t" style="left:340.5px;top:137.10px;font-size:6.6px;line-height:6.6px;color:#555555;transform:scaleX(0.9304);">10/1/2020</div>
<div class="t" style="left:380.3px;top:137.10px;font-size:6.6px;line-height:6.6px;color:#555555;transform:scaleX(0.9201);">8/23/2021</div>
<div class="t" style="right:305.00px;transform-origin:100% 50%;top:137.10px;font-size:6.6px;line-height:6.6px;color:#555555;transform:scaleX(1.0167);">228</div>
<div class="t" style="left:239.1px;top:153.10px;font-size:6.6px;line-height:6.6px;color:#555555;transform:scaleX(0.9154);">General Process Methodology</div>
<div class="t" style="left:340.5px;top:153.10px;font-size:6.6px;line-height:6.6px;color:#555555;transform:scaleX(0.9304);">10/1/2020</div>
<div class="t" style="left:380.3px;top:153.10px;font-size:6.6px;line-height:6.6px;color:#555555;transform:scaleX(0.9349);">3/2/2021</div>
<div class="t" style="right:305.00px;transform-origin:100% 50%;top:153.10px;font-size:6.6px;line-height:6.6px;color:#555555;transform:scaleX(1.0167);">105</div>
<div class="t" style="left:245.7px;top:169.10px;font-size:6.6px;line-height:6.6px;color:#555555;transform:scaleX(0.9198);">Data Management</div>
<div class="t" style="left:340.5px;top:169.10px;font-size:6.6px;line-height:6.6px;color:#555555;transform:scaleX(0.9177);">10/31/2020</div>
<div class="t" style="left:380.3px;top:169.10px;font-size:6.6px;line-height:6.6px;color:#555555;transform:scaleX(0.9349);">2/4/2021</div>
<div class="t" style="right:305.00px;transform-origin:100% 50%;top:169.10px;font-size:6.6px;line-height:6.6px;color:#555555;transform:scaleX(1.1335);">65</div>
<div class="t" style="left:245.7px;top:185.10px;font-size:6.6px;line-height:6.6px;color:#555555;transform:scaleX(0.9607);">Documentation and Automation</div>
<div class="t" style="left:340.5px;top:185.10px;font-size:6.6px;line-height:6.6px;color:#555555;transform:scaleX(0.9269);">12/2/2020</div>
<div class="t" style="left:380.3px;top:185.10px;font-size:6.6px;line-height:6.6px;color:#555555;transform:scaleX(0.9349);">3/2/2021</div>
<div class="t" style="right:305.00px;transform-origin:100% 50%;top:185.10px;font-size:6.6px;line-height:6.6px;color:#555555;transform:scaleX(1.0175);">62</div>
<div class="t" style="left:239.1px;top:201.10px;font-size:6.6px;line-height:6.6px;color:#555555;transform:scaleX(0.9559);">Quality Control</div>
<div class="t" style="left:340.5px;top:201.10px;font-size:6.6px;line-height:6.6px;color:#555555;transform:scaleX(0.9269);">1/22/2021</div>
<div class="t" style="left:380.3px;top:201.10px;font-size:6.6px;line-height:6.6px;color:#555555;transform:scaleX(0.9269);">5/25/2021</div>
<div class="t" style="right:305.00px;transform-origin:100% 50%;top:201.10px;font-size:6.6px;line-height:6.6px;color:#555555;transform:scaleX(1.0175);">88</div>
<div class="t" style="left:245.7px;top:217.10px;font-size:6.6px;line-height:6.6px;color:#555555;transform:scaleX(0.9039);">Accuracy Assessment</div>
<div class="t" style="left:340.5px;top:217.10px;font-size:6.6px;line-height:6.6px;color:#555555;transform:scaleX(0.9269);">1/22/2021</div>
<div class="t" style="left:380.3px;top:217.10px;font-size:6.6px;line-height:6.6px;color:#555555;transform:scaleX(0.9269);">4/30/2021</div>
<div class="t" style="right:305.00px;transform-origin:100% 50%;top:217.10px;font-size:6.6px;line-height:6.6px;color:#555555;transform:scaleX(0.9768);">71</div>
<div class="t" style="left:499.90000000000003px;top:138.90px;font-size:5.9px;line-height:5.9px;color:#ffffff;transform:scaleX(0.8879);-webkit-text-stroke:0.3px #fff">Kendall Yards Site Assessment</div>
<div class="t" style="left:499.90000000000003px;top:154.90px;font-size:5.9px;line-height:5.9px;color:#ffffff;transform:scaleX(0.8984);-webkit-text-stroke:0.3px #fff">General Process Methodology</div>
<div class="t" style="left:512.6999999999999px;top:170.50px;font-size:5.9px;line-height:5.9px;color:#ffffff;transform:scaleX(0.9016);-webkit-text-stroke:0.3px #fff">Data Management</div>
<div class="t" style="left:533.5px;top:186.60px;font-size:5.9px;line-height:5.9px;color:#ffffff;transform:scaleX(0.9400);-webkit-text-stroke:0.3px #fff">Documentation ...</div>
<div class="t" style="left:561.1999999999999px;top:202.50px;font-size:5.9px;line-height:5.9px;color:#ffffff;transform:scaleX(0.9392);-webkit-text-stroke:0.3px #fff">Quality Control</div>
<div class="t" style="left:561.1999999999999px;top:218.40px;font-size:5.9px;line-height:5.9px;color:#ffffff;transform:scaleX(0.8781);-webkit-text-stroke:0.3px #fff">Accuracy Assessment</div>
</body></html>
